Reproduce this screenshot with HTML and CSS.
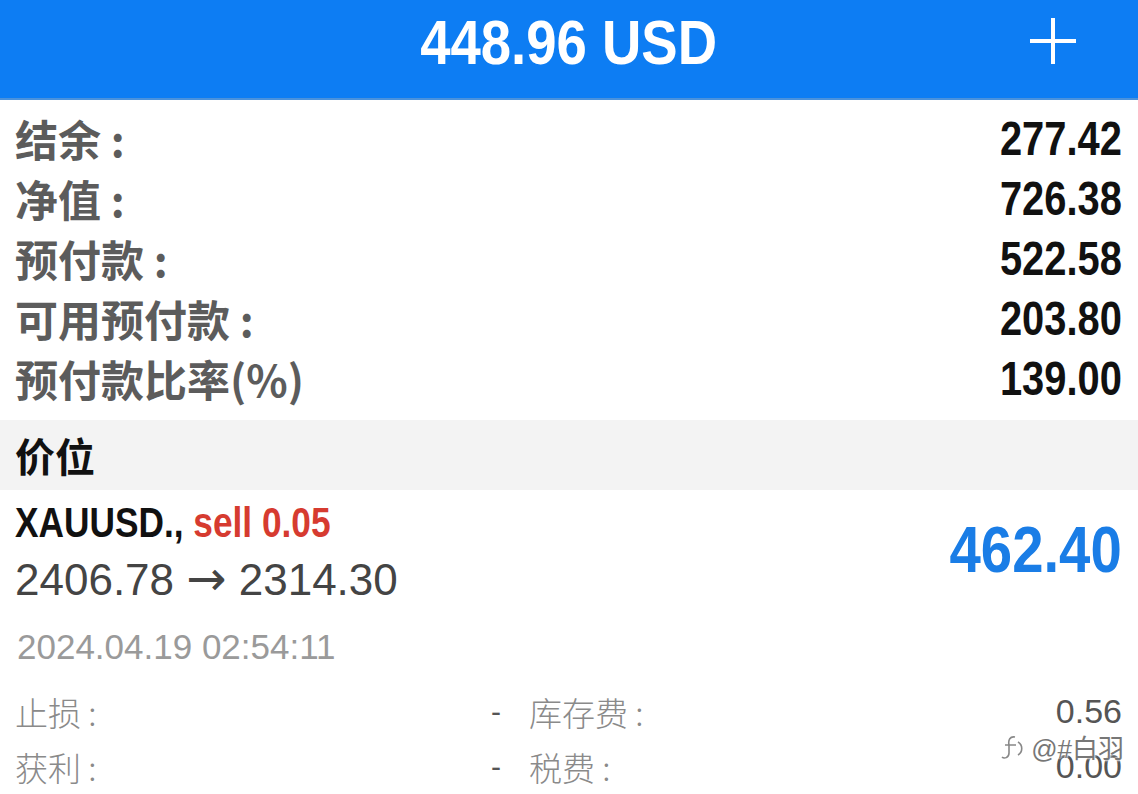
FILE: index.html
```html
<!DOCTYPE html>
<html lang="zh-CN">
<head>
  <meta charset="UTF-8" />
  <meta name="viewport" content="width=device-width, initial-scale=1" />
  <title>交易</title>
  <link rel="stylesheet" href="styles.css">
</head>
<body>
  <header class="topbar">
    <h1 class="balance-title">448.96 USD</h1>
    <button class="add-btn" aria-label="新订单">
      <svg width="50" height="50" viewBox="0 0 50 50">
        <path d="M25 2 V48 M2 25 H48" stroke="#fff" stroke-width="4" fill="none" />
      </svg>
    </button>
  </header>

  <section class="summary">
    <div class="row"><span class="label">结余 :</span><span class="value">277.42</span></div>
    <div class="row"><span class="label">净值 :</span><span class="value">726.38</span></div>
    <div class="row"><span class="label">预付款 :</span><span class="value">522.58</span></div>
    <div class="row"><span class="label">可用预付款 :</span><span class="value">203.80</span></div>
    <div class="row"><span class="label">预付款比率(%)</span><span class="value">139.00</span></div>
  </section>

  <div class="section-head">价位</div>

  <section class="position">
    <div class="pos-main">
      <div class="pos-info">
        <div class="pos-symbol">XAUUSD., <span class="pos-side">sell 0.05</span></div>
        <div class="pos-prices">2406.78 <span class="arrow">→</span> 2314.30</div>
      </div>
      <div class="pos-profit">462.40</div>
    </div>
    <div class="pos-time">2024.04.19 02:54:11</div>
    <div class="pos-details">
      <div class="detail"><span>止损 :</span><span class="dash">-</span></div>
      <div class="detail"><span>库存费 :</span><span class="num">0.56</span></div>
      <div class="detail"><span>获利 :</span><span class="dash">-</span></div>
      <div class="detail"><span>税费 :</span><span class="num">0.00</span></div>
    </div>
  </section>

  <div class="watermark">
    <svg width="26" height="28" viewBox="0 0 26 28">
      <path d="M16 4 C11 3 9 7 10 12 L10 20 C10 25 5 26 3 24 M6 12 H17 M19 9 C24 12 24 19 19 22" stroke="#888" stroke-width="1.6" fill="none" />
    </svg>
    <span>@#白羽</span>
  </div>
</body>
</html>
```

FILE: styles.css
```css
body {
  margin: 0;
  width: 1138px;
  height: 794px;
  overflow: hidden;
  background: #fff;
  font-family: "Liberation Sans", "Noto Sans CJK SC", sans-serif;
  position: relative;
}

.topbar {
  height: 98px;
  background: #0d7df3;
  border-bottom: 2px solid #4a92dc;
  display: flex;
  align-items: center;
  justify-content: center;
  position: relative;
}

/* condensed look: no narrow face installed, so squeeze the bold face */
.balance-title {
  margin: 0;
  color: #fff;
  font-family: "Liberation Sans", sans-serif;
  font-weight: bold;
  font-size: 63px;
  line-height: 1;
  padding-bottom: 14px;
  transform: scaleX(0.865);
}

.add-btn {
  position: absolute;
  right: 60px;
  top: 16px;
  background: none;
  border: none;
  padding: 0;
  width: 50px;
  height: 50px;
}

.summary {
  padding: 8px 16px 12px 15px;
}

.row {
  display: flex;
  justify-content: space-between;
  align-items: center;
  height: 60px;
}

.label {
  font-family: "Noto Sans CJK SC", sans-serif;
  font-weight: bold;
  font-size: 43px;
  color: #5c5c5c;
}

.value {
  font-family: "Liberation Sans", sans-serif;
  font-weight: bold;
  font-size: 48px;
  color: #111;
  transform: scaleX(0.83);
  transform-origin: right center;
}

.section-head {
  height: 70px;
  line-height: 70px;
  background: #f3f3f3;
  padding-left: 15px;
  font-family: "Noto Sans CJK SC", sans-serif;
  font-weight: bold;
  font-size: 40px;
  color: #111;
}

.position {
  padding: 0 16px 0 15px;
}

.pos-main {
  display: flex;
  justify-content: space-between;
  align-items: center;
  padding-top: 4px;
}

.pos-symbol {
  height: 56px;
  line-height: 56px;
  font-family: "Liberation Sans", sans-serif;
  font-weight: bold;
  font-size: 43px;
  color: #111;
  transform: scaleX(0.82);
  transform-origin: left center;
  white-space: nowrap;
}

.pos-side {
  color: #d63b30;
}

.pos-prices {
  height: 60px;
  line-height: 60px;
  font-size: 44px;
  color: #444;
  white-space: nowrap;
}

.arrow {
  font-family: "DejaVu Sans", sans-serif;
  font-size: 48px;
  line-height: 1;
}

.pos-profit {
  font-family: "Liberation Sans", sans-serif;
  font-weight: bold;
  font-size: 64px;
  color: #1a7de6;
  padding-bottom: 4px;
  transform: scaleX(0.88);
  transform-origin: right center;
}

.pos-time {
  height: 74px;
  line-height: 74px;
  font-size: 35px;
  color: #9a9a9a;
  padding-left: 2px;
}

.pos-details {
  display: grid;
  grid-template-columns: 486px 1fr;
  column-gap: 28px;
}

.detail {
  display: flex;
  justify-content: space-between;
  align-items: center;
  height: 55px;
  font-family: "Noto Sans CJK SC", sans-serif;
  font-weight: 300;
  font-size: 33px;
  color: #8a8a8a;
}

.dash {
  font-family: "Liberation Sans", sans-serif;
  color: #555;
  font-size: 30px;
}

.num {
  font-family: "Liberation Sans", sans-serif;
  font-size: 34px;
  color: #555;
}

.watermark {
  position: absolute;
  right: 14px;
  top: 728px;
  display: flex;
  align-items: center;
  gap: 6px;
  font-family: "Liberation Sans", "Noto Sans CJK SC", sans-serif;
  font-size: 26px;
  color: #777;
  text-shadow: 0 0 2px #fff, 0 0 2px #fff, 0 0 3px #fff;
}
```
